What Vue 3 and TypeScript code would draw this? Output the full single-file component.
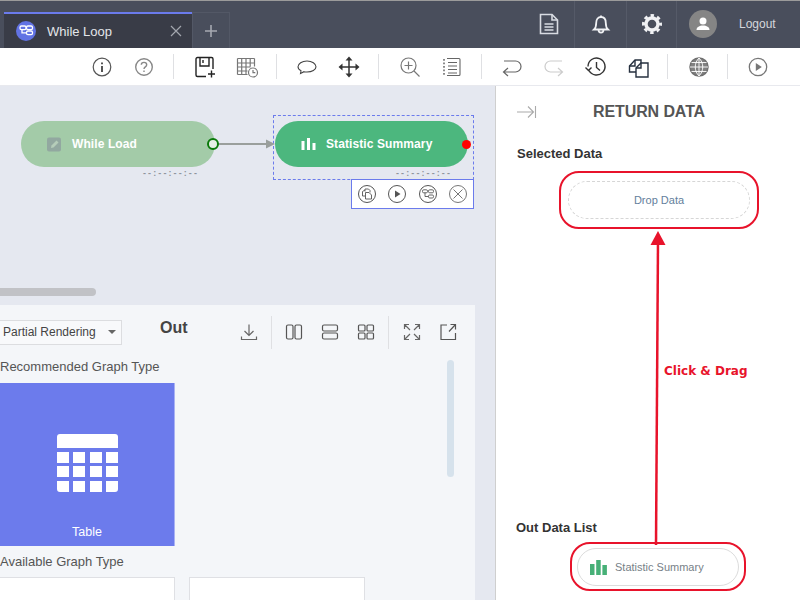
<script setup lang="ts">
const timeMark = '--:--:--:--'
</script>

<template>
  <div class="app">
    <header class="topbar">
      <div class="tabs">
        <div class="tab">
          <span class="tab-logo">
            <svg width="20" height="20" viewBox="0 0 20 20" fill="none" stroke="#fff" stroke-width="1.3">
              <rect x="4" y="5" width="6" height="3.6" rx="1.4" />
              <rect x="10.5" y="10" width="6" height="3.6" rx="1.4" />
              <rect x="10.5" y="5" width="6" height="3.6" rx="1.4" />
              <path d="M6 8.6v3.2h4.5" />
            </svg>
          </span>
          <span class="tab-title">While Loop</span>
          <svg class="tab-close" width="12" height="12" viewBox="0 0 12 12" stroke="#a3a6ae" stroke-width="1.2">
            <path d="M1 1l10 10M11 1L1 11" />
          </svg>
        </div>
        <div class="tab-add">
          <svg width="14" height="14" viewBox="0 0 14 14" stroke="#a6a9b1" stroke-width="1.6">
            <path d="M7 1v12M1 7h12" />
          </svg>
        </div>
      </div>
      <div class="top-actions">
        <div class="top-btn">
          <svg width="24" height="24" viewBox="0 0 24 24" fill="none" stroke="#d8dbe2" stroke-width="1.6">
            <path d="M3.500 2.500h11.500l5.500 5.500v13.500H3.500z" />
            <path d="M15 2.500v5.500h5.500" />
            <path d="M7.500 12h9M7.500 15h9M7.500 18h9" />
          </svg>
        </div>
        <div class="top-btn bell">
          <svg width="24" height="24" viewBox="0 0 24 24" fill="none" stroke="#f0f1f4" stroke-width="1.800">
            <path d="M5 17.500c1.500-1.300 2.200-3 2.200-6.500 0-3.800 2-6 4.800-6s4.800 2.200 4.800 6c0 3.500.7 5.200 2.200 6.500z" />
            <path d="M9.500 17.500c0 4.200 5 4.200 5 0M12 3.500V5" />
          </svg>
        </div>
        <div class="top-btn gear">
          <svg width="24" height="24" viewBox="0 0 24 24" fill="none" stroke="#f0f1f4">
            <circle cx="12" cy="12" r="6" stroke-width="3.4" />
            <circle cx="12" cy="12" r="8.500" stroke-width="3" stroke-dasharray="3.400 3.276" stroke-dashoffset="1.700" />
          </svg>
        </div>
        <div class="user">
          <span class="avatar">
            <svg width="16" height="16" viewBox="0 0 16 16" fill="#fff">
              <circle cx="8" cy="5" r="3.500" />
              <path d="M1.500 14c0-3 3-4.500 6.500-4.500s6.500 1.500 6.500 4.500z" />
            </svg>
          </span>
          <span class="logout">Logout</span>
        </div>
      </div>
    </header>

    <nav class="toolbar">
      <button class="tool">
        <svg width="24" height="24" viewBox="0 0 24 24" fill="none" stroke="#555" stroke-width="1.200">
          <circle cx="12" cy="12" r="8.800" />
          <path d="M12 11v6" stroke-width="2" />
          <path d="M12 7.500v1.800" stroke-width="2" />
        </svg>
      </button>
      <button class="tool">
        <svg width="24" height="24" viewBox="0 0 24 24" fill="none" stroke="#888" stroke-width="1.400">
          <circle cx="12" cy="12" r="8.300" />
          <path d="M9.300 9.800c0-3.300 5.400-3.300 5.400 0 0 2.200-2.700 2-2.700 4.200M12 15.500v1.500" />
        </svg>
      </button>
      <i class="sep wide"></i>
      <button class="tool">
        <svg width="24" height="24" viewBox="0 0 24 24" fill="none" stroke="#222" stroke-width="1.400">
          <path d="M13 21.500H4.500a1.500 1.500 0 0 1-1.500-1.500V4a1.500 1.500 0 0 1 1.500-1.500h14A1.500 1.500 0 0 1 20 4v10" />
          <path d="M7 2.500v8.500h9V2.500M10 5v3" />
          <path d="M15 19h7M18.500 15.500v7" />
        </svg>
      </button>
      <button class="tool">
        <svg width="24" height="24" viewBox="0 0 24 24" fill="none" stroke="#777" stroke-width="1.200">
          <path d="M2.500 3.500h17M2.500 8h17M2.500 12h13M2.500 16h10M2.500 19.500h10M2.500 3.500v16M6.700 3.500v16M11 3.500v16M15.200 3.500v8M19.500 3.500v8" />
          <circle cx="18" cy="17.500" r="4.500" fill="#fff" />
          <path d="M18 15v2.700h2.300" />
        </svg>
      </button>
      <i class="sep"></i>
      <button class="tool">
        <svg width="24" height="24" viewBox="0 0 24 24" fill="none" stroke="#444" stroke-width="1.100">
          <path d="M6 15.800c-2-1-3-2.300-3-4C3 8.700 7 6 12 6s9 2.700 9 5.800-4 5.200-9 5.200c-1 0-2 0-3-.3L5.500 18.500z" />
        </svg>
      </button>
      <button class="tool">
        <svg width="24" height="24" viewBox="0 0 24 24" fill="#333" stroke="#333">
          <path d="M12 4v16M4 12h16" stroke-width="1.500" />
          <path d="M12 1.500l3.500 4h-7zM12 22.500l-3.500-4h7zM1.500 12l4-3.500v7zM22.500 12l-4 3.500v-7z" stroke="none" />
        </svg>
      </button>
      <i class="sep wide"></i>
      <button class="tool">
        <svg width="24" height="24" viewBox="0 0 24 24" fill="none" stroke="#777" stroke-width="1.200">
          <circle cx="10.500" cy="10.500" r="7.500" />
          <path d="M16 16l5.500 5.500M10.500 6.500v8M6.500 10.500h8" />
        </svg>
      </button>
      <button class="tool">
        <svg width="24" height="24" viewBox="0 0 24 24" fill="none" stroke="#666" stroke-width="1.100">
          <path d="M7 3.500h12a1 1 0 0 1 1 1v15a1 1 0 0 1-1 1H7M8 7.500h9M8 11h9M8 14.500h9M8 18h9" />
          <path d="M4 4v16.500" stroke-dasharray="1.800 1.700" stroke-width="1.500" />
        </svg>
      </button>
      <i class="sep"></i>
      <button class="tool">
        <svg width="24" height="24" viewBox="0 0 24 24" fill="none" stroke="#666" stroke-width="1.200">
          <path d="M4 6h11.500a5.500 5.500 0 0 1 0 11H4M8 13l-4.500 4L8 21" />
        </svg>
      </button>
      <button class="tool">
        <svg width="24" height="24" viewBox="0 0 24 24" fill="none" stroke="#ccc" stroke-width="1.200">
          <path d="M20 6H8.500a5.500 5.500 0 0 0 0 11H20M16 13l4.500 4-4.500 4" />
        </svg>
      </button>
      <button class="tool">
        <svg width="24" height="24" viewBox="0 0 24 24" fill="none" stroke="#333" stroke-width="1.400">
          <path d="M5 15.500A8.500 8.500 0 1 0 4 11.500" />
          <path d="M1.500 12.500L4.500 15.500L7.500 12.500" />
          <path d="M12.500 7v5.500l3.500 3" />
        </svg>
      </button>
      <button class="tool">
        <svg width="24" height="24" viewBox="0 0 24 24" fill="none" stroke="#26303f" stroke-width="1.400">
          <path d="M10 17H3.500v-6L9 5h6v3" />
          <path d="M9 5v6H3.500" />
          <path d="M10 13l5-5h7v14H10z" />
          <path d="M15 8v5h-5" />
        </svg>
      </button>
      <i class="sep wide"></i>
      <button class="tool">
        <svg width="24" height="24" viewBox="0 0 24 24" fill="none" stroke="#707070" stroke-width="1.500">
          <circle cx="12" cy="12" r="9" fill="#808080" />
          <path d="M12 3c-5 5-5 13 0 18M12 3c5 5 5 13 0 18M12 3v18M3 12h18M4.500 7.500h15M4.500 16.500h15" stroke="#fff" stroke-width=".9" />
        </svg>
      </button>
      <i class="sep narrow"></i>
      <button class="tool">
        <svg width="24" height="24" viewBox="0 0 24 24" fill="none" stroke="#777" stroke-width="1.300">
          <circle cx="12" cy="12" r="8.700" />
          <path d="M9.800 8l6 4-6 4z" fill="#777" stroke="none" />
        </svg>
      </button>
    </nav>

    <main class="workspace">
      <section class="editor">
        <div class="canvas">
          <div class="selection"></div>
          <div class="node faded">
            <svg width="15" height="15" viewBox="0 0 15 15">
              <rect width="14" height="14" y=".5" rx="2" fill="#92a8a0" />
              <path d="M4 11l.5-2.500L9.500 3.500l2 2-5 5z" fill="#b5cdb9" />
            </svg>
            <span>While Load</span>
          </div>
          <span class="time first">{{ timeMark }}</span>
          <div class="node active">
            <svg width="15" height="15" viewBox="0 0 15 15" fill="#fff">
              <path d="M.5 4h3v9h-3zM6 1h3v12H6zM11.500 6h3v7h-3z" />
            </svg>
            <span>Statistic Summary</span>
          </div>
          <span class="time second">{{ timeMark }}</span>
          <svg class="link" width="70" height="16" viewBox="0 0 70 16">
            <path d="M5 8h48" stroke="#9a9f9c" stroke-width="1.800" />
            <path d="M53 3.500L62 8l-9 4.500z" fill="#9a9f9c" />
          </svg>
          <span class="port out"></span>
          <span class="port end"></span>
          <div class="node-actions">
            <svg width="20" height="20" viewBox="0 0 20 20" fill="none" stroke="#555">
              <circle cx="10" cy="10" r="8.500" />
              <path d="M8 7.500V5h3.500l1.500 1.500v2M8 12H5.500V7.500L8 6M8.500 8.500h3.500l2.500 2.500v4h-6z" stroke-width=".9" />
            </svg>
            <svg width="20" height="20" viewBox="0 0 20 20" fill="none" stroke="#555">
              <circle cx="10" cy="10" r="8.500" />
              <path d="M8 6.500l5.500 3.500L8 13.500z" fill="#555" stroke="none" />
            </svg>
            <svg width="20" height="20" viewBox="0 0 20 20" fill="none" stroke="#555">
              <circle cx="10" cy="10" r="8.500" />
              <rect x="4.500" y="5.800" width="5" height="3" rx="1.200" stroke-width=".9" />
              <rect x="10.500" y="5.800" width="5" height="3" rx="1.200" stroke-width=".9" />
              <rect x="10.500" y="11" width="5" height="3" rx="1.200" stroke-width=".9" />
              <path d="M7 8.800v3.700h3.500" stroke-width=".9" />
            </svg>
            <svg width="20" height="20" viewBox="0 0 20 20" fill="none" stroke="#777">
              <circle cx="10" cy="10" r="8.500" />
              <path d="M5.500 5.500l9 9M14.500 5.500l-9 9" />
            </svg>
          </div>
          <div class="hscroll"></div>
        </div>

        <div class="output">
          <div class="output-head">
            <div class="render-select">
              <span>Partial Rendering</span>
              <i class="caret"></i>
            </div>
            <h3>Out</h3>
            <div class="output-tools">
              <svg width="20" height="20" viewBox="0 0 20 20" fill="none" stroke="#666" stroke-width="1.200">
                <path d="M10 2.500v11M5.500 9l4.500 4.500L14.500 9M2.500 14.500v3h15v-3" />
              </svg>
              <i class="sep tall"></i>
              <svg width="24" height="20" viewBox="0 0 24 20" fill="none" stroke="#555" stroke-width="1.200">
                <rect x="4.500" y="3" width="6.500" height="14" rx="1.500" />
                <rect x="13" y="3" width="6.500" height="14" rx="1.500" />
              </svg>
              <svg width="24" height="20" viewBox="0 0 24 20" fill="none" stroke="#555" stroke-width="1.200">
                <rect x="4.500" y="3" width="15" height="6" rx="1.500" />
                <rect x="4.500" y="11" width="15" height="6" rx="1.500" />
              </svg>
              <svg width="24" height="20" viewBox="0 0 24 20" fill="none" stroke="#555" stroke-width="1.200">
                <rect x="4.500" y="3" width="6.500" height="6" rx="1" />
                <rect x="13" y="3" width="6.500" height="6" rx="1" />
                <rect x="4.500" y="11" width="6.500" height="6" rx="1" />
                <rect x="13" y="11" width="6.500" height="6" rx="1" />
              </svg>
              <i class="sep tall second"></i>
              <svg width="20" height="20" viewBox="0 0 20 20" fill="none" stroke="#666" stroke-width="1.200">
                <path d="M2.500 7V2.500H7M2.500 2.500L8 8M17.500 7V2.500H13M17.500 2.500L12 8M2.500 13v4.500H7M2.500 17.500L8 12M17.500 13v4.500H13M17.500 17.500L12 12" />
              </svg>
              <svg class="last" width="20" height="20" viewBox="0 0 20 20" fill="none" stroke="#555" stroke-width="1.200">
                <path d="M9 3H3v14.500h14.500V11M11 9.500l6.500-7M12.500 2.500h5v5" />
              </svg>
            </div>
          </div>
          <p class="graph-label">Recommended Graph Type</p>
          <div class="graph-tile">
            <svg width="61" height="58" viewBox="0 0 61 58" fill="#fff">
              <path d="M3 0h55a3 3 0 0 1 3 3v11H0V3a3 3 0 0 1 3-3z" />
              <path d="M0 18h12v11H0zM16 18h12v11H16zM33 18h12v11H33zM49 18h12v11H49zM0 32h12v11H0zM16 32h12v11H16zM33 32h12v11H33zM49 32h12v11H49zM0 47h12v11H3a3 3 0 0 1-3-3zM16 47h12v11H16zM33 47h12v11H33zM49 47h12v8a3 3 0 0 1-3 3h-9z" />
            </svg>
            <span>Table</span>
          </div>
          <p class="graph-label available">Available Graph Type</p>
          <div class="graph-cards">
            <div class="graph-card first"></div>
            <div class="graph-card"></div>
          </div>
          <div class="vscroll"></div>
        </div>
      </section>

      <aside class="side">
        <div class="side-head">
          <svg width="20" height="14" viewBox="0 0 20 14" fill="none" stroke="#aaa" stroke-width="1.100">
            <path d="M0 7h16M11 1.500L16.500 7 11 12.500M18.500 1v12" />
          </svg>
          <h2>RETURN DATA</h2>
        </div>
        <h4 class="side-label">Selected Data</h4>
        <div class="hilite drop-frame">
          <div class="drop-zone">Drop Data</div>
        </div>
        <div class="spacer"></div>
        <h4 class="side-label list">Out Data List</h4>
        <div class="hilite item-frame">
          <div class="data-item">
            <svg width="17" height="16" viewBox="0 0 17 16" fill="#47b077">
              <path d="M0 5h4.500v11H0zM6.200 1h4.500v15H6.200zM12.400 6h4.500v10h-4.500z" />
            </svg>
            <span>Statistic Summary</span>
          </div>
        </div>
        <svg class="drag-arrow" width="20" height="314" viewBox="0 0 20 314" fill="none">
          <path d="M7 314L9 10" stroke="#e8132b" stroke-width="2.500" />
          <path d="M9 0l7.500 14H1.500z" fill="#e8132b" />
        </svg>
        <span class="drag-note">Click &amp; Drag</span>
      </aside>
    </main>
  </div>
</template>

<style>
html,
body {
  margin: 0;
  overflow: hidden;
}
</style>

<style scoped>
.app {
  width: 800px;
  height: 600px;
  display: flex;
  flex-direction: column;
  overflow: hidden;
  font-family: "Liberation Sans", Arial, sans-serif;
  background: #fff;
}

/* top bar */
.topbar {
  height: 47px;
  flex: none;
  display: flex;
  justify-content: space-between;
  background: #494e5c;
  border-top: 1px solid #9b9b9b;
}

.tabs {
  display: flex;
  align-items: flex-end;
  padding-left: 4px;
}

.tab {
  width: 188px;
  height: 36px;
  box-sizing: border-box;
  display: flex;
  align-items: center;
  padding: 0 10px 0 12px;
  background: #393c47;
  border-top: 2px solid #6b7bec;
  color: #e4e6ea;
  font-size: 13px;
}

.tab-logo {
  width: 20px;
  height: 20px;
  border-radius: 50%;
  background: #6273e4;
}

.tab-title {
  margin-left: 11px;
  flex: 1;
}

.tab-add {
  width: 38px;
  height: 36px;
  box-sizing: border-box;
  display: flex;
  align-items: center;
  justify-content: center;
  border: 1px solid #535866;
  border-bottom: none;
}

.top-actions {
  display: flex;
}

.top-btn {
  width: 52px;
  padding-bottom: 1px;
  display: flex;
  align-items: center;
  justify-content: center;
  border-right: 1px solid #555a68;
  box-sizing: border-box;
}

.top-btn.gear {
  width: 50px;
}

.user {
  width: 123px;
  padding: 0 0 1px 12px;
  display: flex;
  align-items: center;
  box-sizing: border-box;
}

.avatar {
  width: 28px;
  height: 28px;
  border-radius: 50%;
  background: #858585;
  display: flex;
  align-items: center;
  justify-content: center;
}

.logout {
  margin-left: 22px;
  font-size: 12px;
  color: #d5d7dc;
}

/* toolbar */
.toolbar {
  height: 37px;
  flex: none;
  display: flex;
  align-items: center;
  justify-content: flex-end;
  padding-right: 21px;
  background: #fff;
  border-bottom: 1px solid #e8e9ee;
}

.tool {
  width: 42px;
  height: 24px;
  padding: 0;
  border: none;
  background: none;
  display: flex;
  justify-content: center;
}

.sep {
  width: 1px;
  height: 25px;
  margin: 0 9px 0 8px;
  background: #dfe0e3;
}

.sep.wide {
  margin-right: 10px;
}

.sep.narrow {
  margin: 0 9px 0 7px;
}

/* main */
.workspace {
  flex: 1;
  display: flex;
  min-height: 0;
}

.editor {
  width: 495px;
  flex: none;
  background: #e5e8f0;
  padding-right: 20px;
  box-sizing: border-box;
  display: flex;
  flex-direction: column;
}

.canvas {
  position: relative;
  height: 219px;
  flex: none;
}

.node {
  position: absolute;
  top: 35px;
  width: 194px;
  height: 46px;
  border-radius: 23px;
  display: flex;
  align-items: center;
  box-sizing: border-box;
  color: #fff;
  font-size: 12px;
  font-weight: bold;
  letter-spacing: .1px;
}

.node svg {
  flex: none;
}

.node.faded {
  left: 21px;
  padding-left: 26px;
  gap: 10px;
  background: #a3cba8;
}

.node.active {
  left: 275px;
  width: 193px;
  padding-left: 26px;
  gap: 10px;
  background: #4cb77e;
}

.selection {
  position: absolute;
  left: 273px;
  top: 29px;
  width: 201px;
  height: 65px;
  box-sizing: border-box;
  border: 1px dashed #6b7bec;
}

.time {
  position: absolute;
  top: 82px;
  font-size: 9px;
  font-weight: bold;
  line-height: 10px;
  letter-spacing: 2.100px;
  color: #8f959d;
}

.time.first {
  left: 143px;
}

.time.second {
  left: 396px;
}

.link {
  position: absolute;
  left: 213px;
  top: 50px;
}

.port {
  position: absolute;
  border-radius: 50%;
  box-sizing: border-box;
}

.port.out {
  left: 207px;
  top: 52px;
  width: 12px;
  height: 12px;
  background: #e5f0e6;
  border: 2px solid #0a7a0a;
}

.port.end {
  left: 462px;
  top: 54px;
  width: 9px;
  height: 9px;
  background: #f00;
}

.node-actions {
  position: absolute;
  left: 351px;
  top: 93px;
  width: 123px;
  height: 30px;
  box-sizing: border-box;
  border: 1px solid #6b7bec;
  background: #fff;
  display: flex;
  align-items: center;
  padding: 0 5px;
  justify-content: space-between;
}

.hscroll {
  position: absolute;
  left: -8px;
  top: 202px;
  width: 104px;
  height: 8px;
  border-radius: 4px;
  background: #c1c2c6;
}

.output {
  position: relative;
  flex: 1;
  background: #f4f6f9;
  min-height: 0;
  color: #555;
}

.output-head {
  display: flex;
  align-items: center;
  height: 54px;
}

.render-select {
  width: 124px;
  height: 25px;
  margin-left: -2px;
  box-sizing: border-box;
  display: flex;
  align-items: center;
  justify-content: space-between;
  padding: 0 5px 0 4px;
  border: 1px solid #dcdde0;
  background: #f8f9fb;
  font-size: 12px;
  color: #444;
}

.caret {
  width: 0;
  height: 0;
  border-left: 4px solid transparent;
  border-right: 4px solid transparent;
  border-top: 4px solid #666;
}

.output-head h3 {
  margin: -8px 0 0 38px;
  font-size: 16px;
  color: #444;
}

.output-tools {
  margin-left: 51px;
  display: flex;
  align-items: center;
}

.output-tools > svg {
  flex: none;
}

.output-tools svg + svg {
  margin-left: 12px;
}

.output-tools svg.last {
  margin-left: 16px;
}

.sep.tall {
  height: 33px;
  margin: 0 10px 0 12px;
}

.sep.tall.second {
  margin: 0 13px 0 10px;
}

.graph-label {
  margin: 0;
  height: 24px;
  font-size: 13px;
  line-height: 15px;
}

.graph-tile {
  width: 175px;
  height: 163px;
  box-sizing: border-box;
  border-right: 1px solid #a9b2f4;
  background: #6c7bec;
  color: #fff;
  font-size: 12.500px;
  display: flex;
  flex-direction: column;
  align-items: center;
  padding-top: 51px;
}

.graph-tile span {
  margin-top: 33px;
}

.graph-label.available {
  margin-top: 8px;
  height: 23px;
}

.graph-cards {
  display: flex;
  gap: 14px;
}

.graph-card {
  width: 176px;
  height: 40px;
  box-sizing: border-box;
  background: #fff;
  border: 1px solid #dfe0e4;
}

.graph-card.first {
  margin-left: -1px;
}

.vscroll {
  position: absolute;
  left: 447px;
  top: 55px;
  width: 7px;
  height: 117px;
  border-radius: 4px;
  background: #d6e2ec;
}

/* return data panel */
.side {
  position: relative;
  flex: 1;
  display: flex;
  flex-direction: column;
  box-sizing: border-box;
  padding-left: 21px;
  background: #fff;
  border-left: 1px solid #cfcfcf;
}

.side-head {
  height: 52px;
  display: flex;
  align-items: center;
}

.side-head h2 {
  margin: 0 0 0 56px;
  font-size: 16px;
  font-weight: bold;
  letter-spacing: -.1px;
  color: #555;
}

.side-label {
  margin: 0;
  height: 25px;
  padding-top: 8px;
  box-sizing: border-box;
  font-size: 13px;
  line-height: 15px;
  color: #333;
}

.side-label.list {
  padding-top: 3px;
  margin-left: -1px;
}

.hilite {
  box-sizing: border-box;
  border: 2px solid #e8132b;
  background: #fff;
  display: flex;
  align-items: center;
  justify-content: center;
}

.drop-frame {
  width: 200px;
  height: 58px;
  margin: 8px 0 0 42px;
  border-radius: 20px;
}

.drop-zone {
  width: 182px;
  height: 38px;
  box-sizing: border-box;
  border: 1px dashed #d6d6d6;
  border-radius: 19px;
  display: flex;
  align-items: center;
  justify-content: center;
  font-size: 11px;
  color: #64809c;
}

.spacer {
  flex: 1;
}

.item-frame {
  width: 176px;
  height: 49px;
  margin: 0 0 9px 53px;
  border-radius: 20px;
}

.data-item {
  width: 162px;
  height: 38px;
  box-sizing: border-box;
  border: 1px solid #dcdcdc;
  border-radius: 19px;
  display: flex;
  align-items: center;
  gap: 8px;
  padding-left: 12px;
  font-size: 11px;
  color: #777f88;
}

.drag-arrow {
  position: absolute;
  left: 153px;
  top: 145px;
}

.drag-note {
  position: absolute;
  left: 168px;
  top: 278px;
  font-family: "DejaVu Sans", sans-serif;
  font-size: 12px;
  font-weight: bold;
  color: #e8132b;
}
</style>
